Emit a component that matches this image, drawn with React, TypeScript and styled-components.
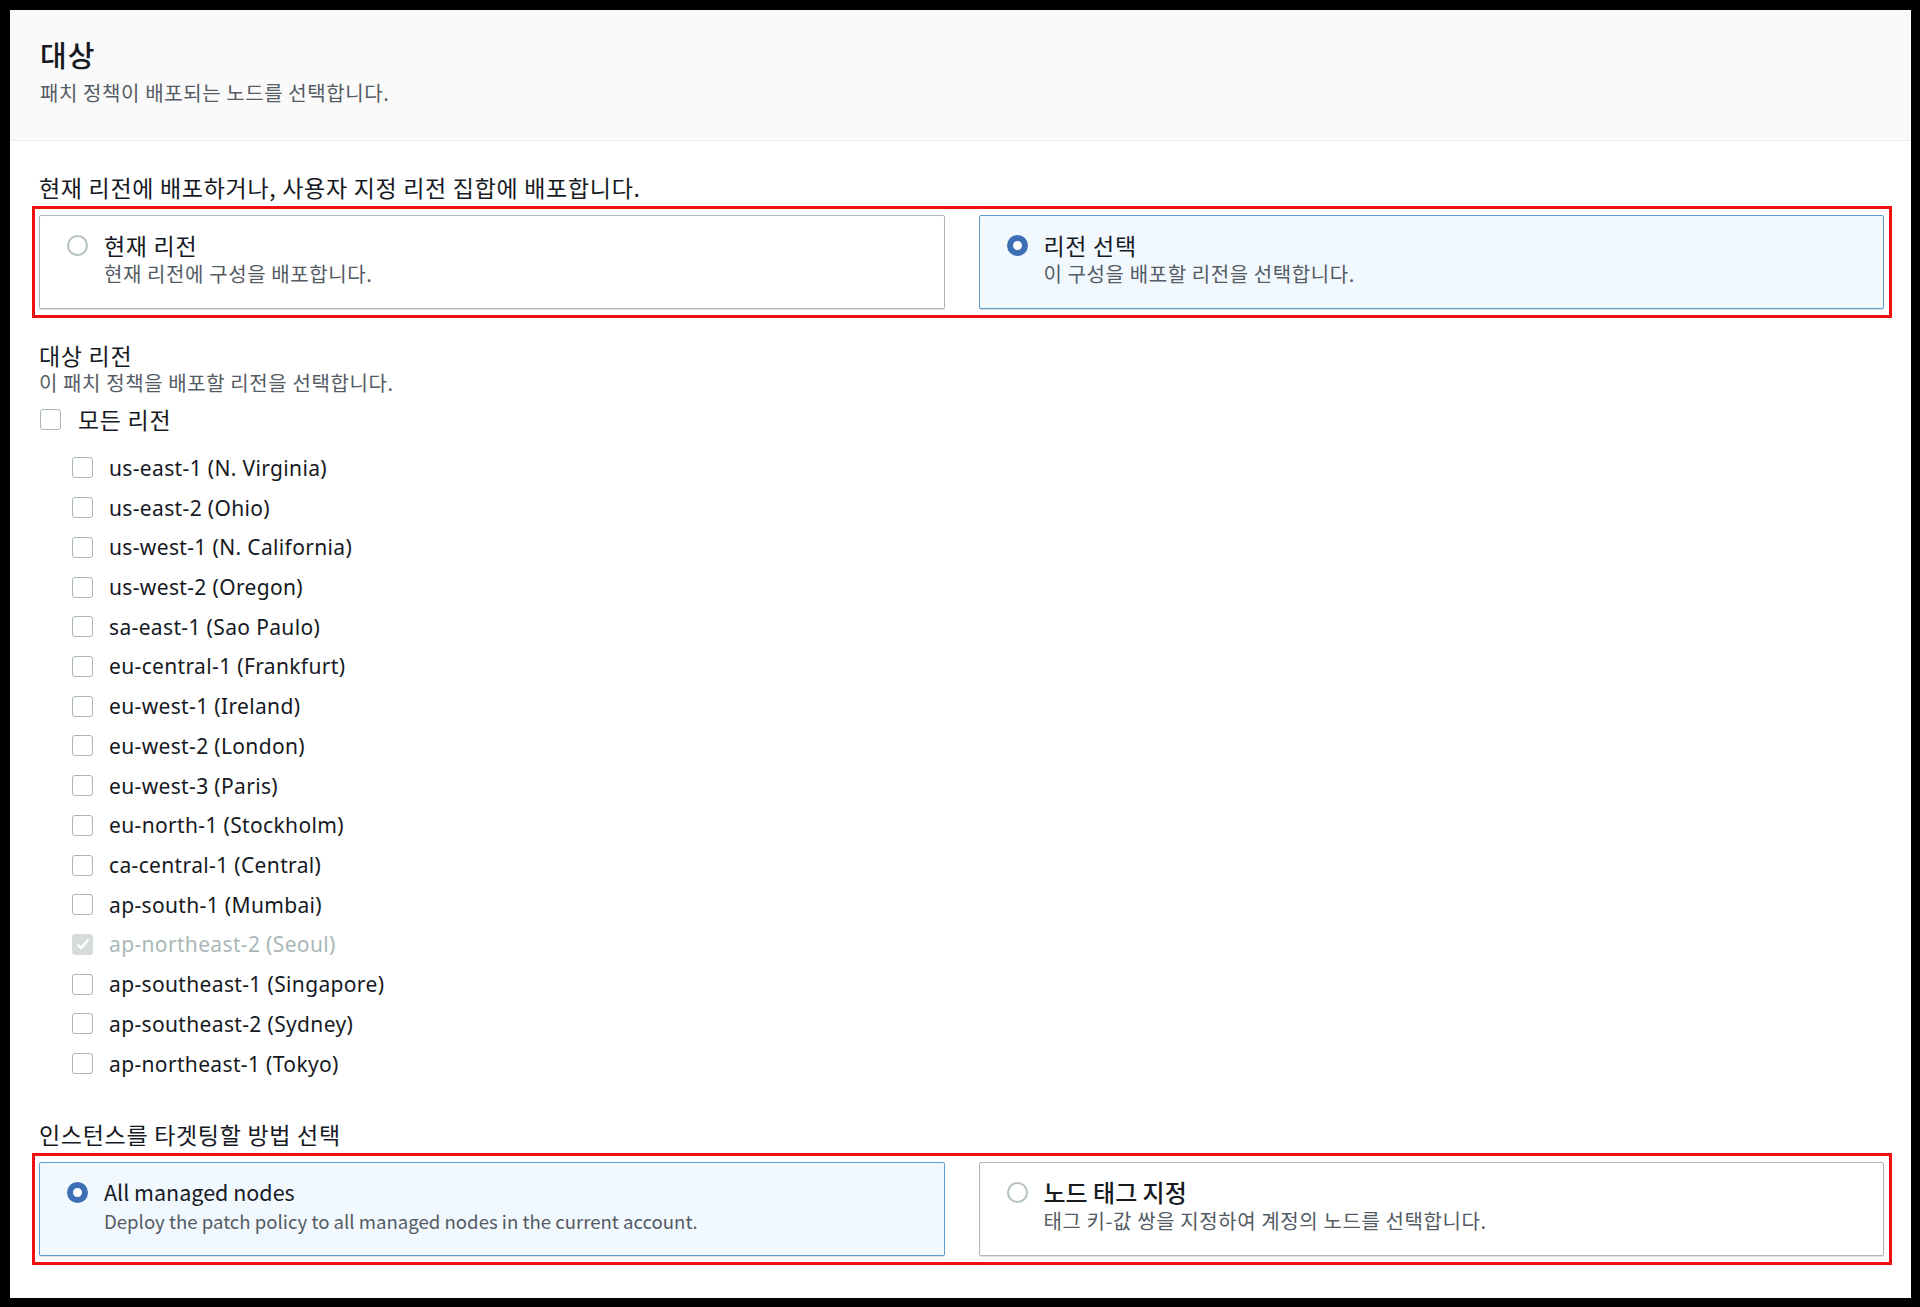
import styled, { createGlobalStyle } from 'styled-components';

const GlobalStyle = createGlobalStyle`
  html, body {
    margin: 0;
    padding: 0;
    background: #000;
  }
  body {
    padding: 10px 9px 9px 10px;
    font-family: 'Noto Sans CJK KR', 'Noto Sans', sans-serif;
    color: #16191f;
  }
`;

const regions = [
  'us-east-1 (N. Virginia)',
  'us-east-2 (Ohio)',
  'us-west-1 (N. California)',
  'us-west-2 (Oregon)',
  'sa-east-1 (Sao Paulo)',
  'eu-central-1 (Frankfurt)',
  'eu-west-1 (Ireland)',
  'eu-west-2 (London)',
  'eu-west-3 (Paris)',
  'eu-north-1 (Stockholm)',
  'ca-central-1 (Central)',
  'ap-south-1 (Mumbai)',
  'ap-northeast-2 (Seoul)',
  'ap-southeast-1 (Singapore)',
  'ap-southeast-2 (Sydney)',
  'ap-northeast-1 (Tokyo)',
];

const App = () => {
  return (
    <>
      <GlobalStyle />
      <Panel>
        <Header>
          <Title>대상</Title>
          <Subtitle>패치 정책이 배포되는 노드를 선택합니다.</Subtitle>
        </Header>
        <Body>
          <Label>현재 리전에 배포하거나, 사용자 지정 리전 집합에 배포합니다.</Label>
          <Highlight>
            <Tiles>
              <Tile>
                <Radio />
                <TileText>
                  <TileTitle>현재 리전</TileTitle>
                  <TileDesc>현재 리전에 구성을 배포합니다.</TileDesc>
                </TileText>
              </Tile>
              <Tile $selected>
                <Radio $checked />
                <TileText>
                  <TileTitle>리전 선택</TileTitle>
                  <TileDesc>이 구성을 배포할 리전을 선택합니다.</TileDesc>
                </TileText>
              </Tile>
            </Tiles>
          </Highlight>

          <FieldLabel>대상 리전</FieldLabel>
          <FieldDesc>이 패치 정책을 배포할 리전을 선택합니다.</FieldDesc>
          <AllRow>
            <Checkbox />
            <AllText>모든 리전</AllText>
          </AllRow>
          <RegionList>
            {regions.map((r) => {
              const locked = r.includes('Seoul');
              return (
                <RegionRow key={r}>
                  <Checkbox $disabled={locked}>
                    {locked && (
                      <svg width="14" height="12" viewBox="0 0 14 12">
                        <path
                          d="M1.5 6.5 L5 10 L12.5 1.5"
                          fill="none"
                          stroke="#fff"
                          strokeWidth="2.4"
                        />
                      </svg>
                    )}
                  </Checkbox>
                  <RegionText $disabled={locked}>{r}</RegionText>
                </RegionRow>
              );
            })}
          </RegionList>

          <TargetLabel>인스턴스를 타겟팅할 방법 선택</TargetLabel>
          <Highlight>
            <Tiles>
              <Tile $selected>
                <Radio $checked />
                <TileText>
                  <TileTitle $latin>All managed nodes</TileTitle>
                  <TileDesc $latin>Deploy the patch policy to all managed nodes in the current account.</TileDesc>
                </TileText>
              </Tile>
              <Tile>
                <Radio />
                <TileText>
                  <TileTitle $large>노드 태그 지정</TileTitle>
                  <TileDesc>태그 키-값 쌍을 지정하여 계정의 노드를 선택합니다.</TileDesc>
                </TileText>
              </Tile>
            </Tiles>
          </Highlight>
        </Body>
      </Panel>
    </>
  );
};

const Panel = styled.div`
  background: #fff;
  height: 1288px;
  box-sizing: border-box;
`;

const Header = styled.div`
  background: #fafafa;
  border-bottom: 1px solid #eaeded;
  padding: 27px 29px 34px 30px;
`;

const Title = styled.h2`
  margin: 0;
  font-size: 29px;
  letter-spacing: 1px;
  line-height: 34px;
  font-weight: 500;
  color: #16191f;
`;

const Subtitle = styled.p`
  margin: 9px 0 0;
  font-size: 20px;
  letter-spacing: 0.6px;
  line-height: 26px;
  color: #545b64;
`;

const Body = styled.div`
  padding: 31px 27px 0 29px;
`;

const Label = styled.div`
  font-size: 23px;
  letter-spacing: 0.7px;
  line-height: 30px;
  color: #16191f;
`;

const Highlight = styled.div`
  margin: 4px -8px 0 -7px;
  border: 3px solid #f01010;
  padding: 6px 5px 6px 4px;
`;

const Tiles = styled.div`
  display: grid;
  grid-template-columns: 1fr 1fr;
  gap: 34px;
`;

const Tile = styled.div<{ $selected?: boolean }>`
  display: flex;
  align-items: flex-start;
  gap: 16px;
  padding: 14px 27px 20px;
  border: 1px solid ${(p) => (p.$selected ? '#5d9ccd' : '#aab7b8')};
  background: ${(p) => (p.$selected ? '#f1f8fe' : '#fff')};
  border-radius: 2px;
  box-shadow: 0 1px 1px rgba(0, 28, 36, 0.15);
`;

const Radio = styled.span<{ $checked?: boolean }>`
  flex: none;
  width: 21px;
  height: 21px;
  margin-top: 5px;
  box-sizing: border-box;
  border-radius: 50%;
  border: ${(p) => (p.$checked ? '6px solid #3d6fb5' : '2px solid #b6c1c2')};
  background: #fff;
`;

const TileText = styled.div`
  display: flex;
  flex-direction: column;
`;

const TileTitle = styled.div<{ $large?: boolean; $latin?: boolean }>`
  font-size: ${(p) => (p.$large ? '24px' : p.$latin ? '21.5px' : '23px')};
  letter-spacing: ${(p) => (p.$large || p.$latin ? '0' : '0.7px')};
  line-height: 30px;
  font-weight: ${(p) => (p.$large ? 500 : 400)};
  color: #16191f;
`;

const TileDesc = styled.div<{ $latin?: boolean }>`
  font-size: ${(p) => (p.$latin ? '18.6px' : '20px')};
  letter-spacing: ${(p) => (p.$latin ? '0' : '0.6px')};
  line-height: 28px;
  color: #545b64;
`;

const FieldLabel = styled.div`
  margin-top: 22px;
  font-size: 23px;
  letter-spacing: 0.7px;
  line-height: 30px;
  color: #16191f;
`;

const FieldDesc = styled.div`
  font-size: 20px;
  letter-spacing: 0.6px;
  line-height: 26px;
  color: #545b64;
`;

const AllRow = styled.div`
  display: flex;
  align-items: center;
  gap: 17px;
  height: 40px;
  margin-top: 3px;
  margin-left: 1px;
`;

const AllText = styled.span`
  font-size: 23px;
  letter-spacing: 0.7px;
  color: #16191f;
`;

const RegionList = styled.div`
  display: flex;
  flex-direction: column;
  margin-top: 9px;
  padding-left: 33px;
`;

const RegionRow = styled.div`
  display: flex;
  align-items: center;
  gap: 16px;
  height: 39.73px;
`;

const Checkbox = styled.span<{ $disabled?: boolean }>`
  flex: none;
  display: flex;
  align-items: center;
  justify-content: center;
  width: 21px;
  height: 21px;
  box-sizing: border-box;
  border-radius: 3px;
  border: 1.5px solid ${(p) => (p.$disabled ? '#d5dbdb' : '#aab7b8')};
  background: ${(p) => (p.$disabled ? '#d5dbdb' : '#fff')};
`;

const RegionText = styled.span<{ $disabled?: boolean }>`
  font-family: 'Noto Sans', 'Noto Sans CJK KR', sans-serif;
  font-size: 21px;
  letter-spacing: 0.35px;
  color: ${(p) => (p.$disabled ? '#aab7b8' : '#16191f')};
`;

const TargetLabel = styled.div`
  margin-top: 35px;
  font-size: 23px;
  letter-spacing: 0.7px;
  line-height: 30px;
  color: #16191f;
`;

export default App;
